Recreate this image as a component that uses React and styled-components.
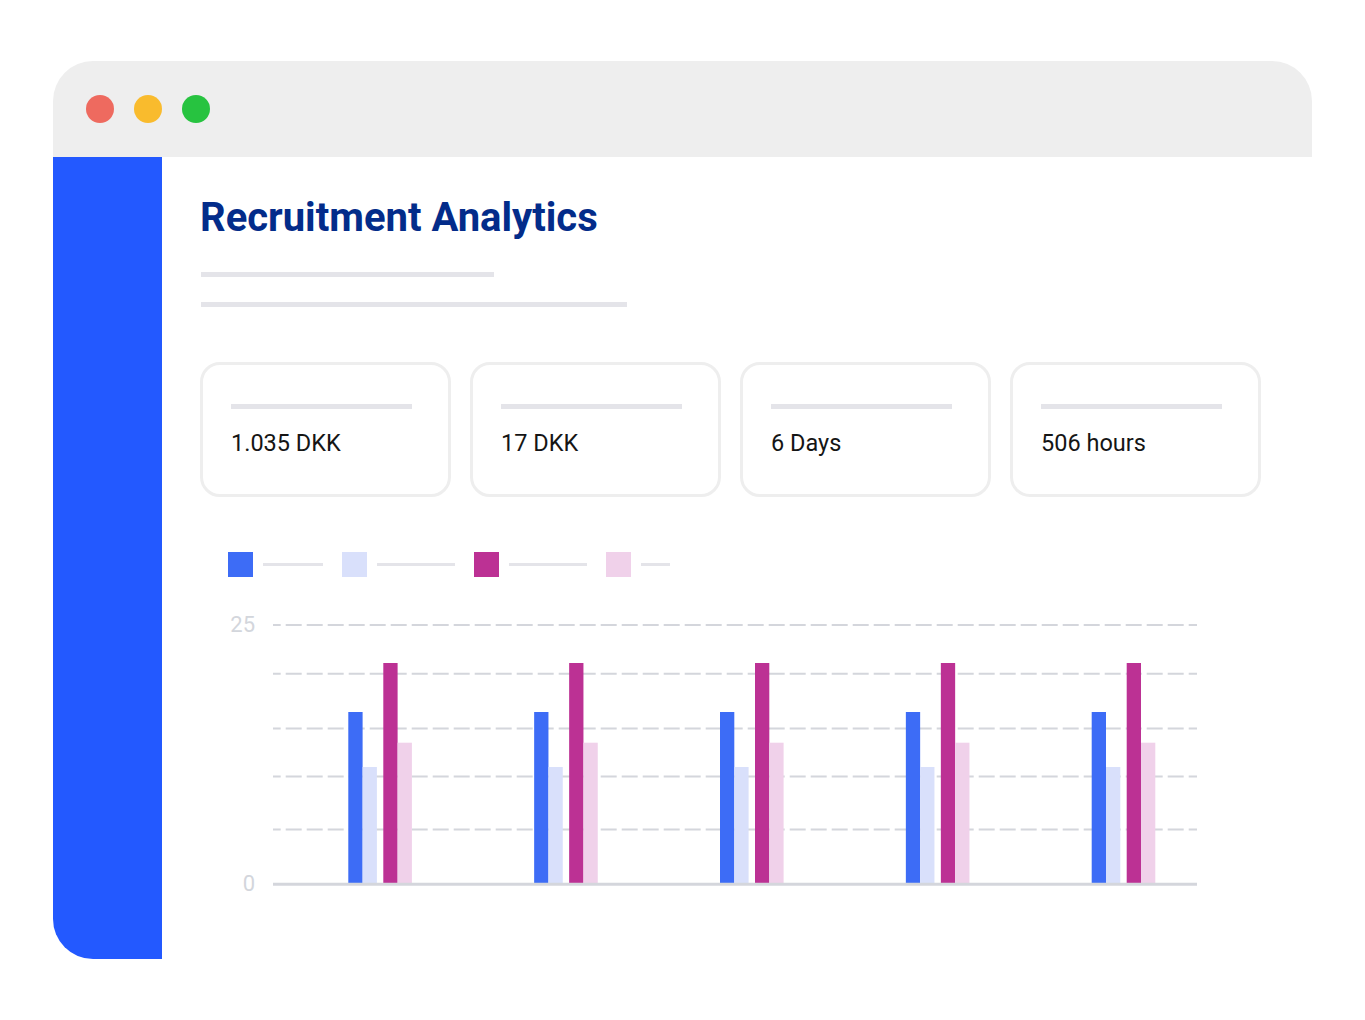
import React from "react";
import styled, { createGlobalStyle } from "styled-components";

const Global = createGlobalStyle`
  html, body { margin: 0; padding: 0; background: #ffffff; }
  body { font-family: Roboto, "Noto Sans", Arial, sans-serif; }
`;

const Page = styled.div`
  padding: 61px 0 61px 53px;
`;

const Window = styled.div`
  width: 1259px;
  height: 898px;
  border-radius: 40px;
  overflow: hidden;
  background: #ffffff;
  display: flex;
  flex-direction: column;
`;

const TitleBar = styled.div`
  height: 96px;
  flex: none;
  background: #eeeeee;
  display: flex;
  align-items: center;
  gap: 20px;
  padding-left: 33px;
`;

const Dot = styled.span`
  width: 28px;
  height: 28px;
  border-radius: 50%;
  background: ${(p) => p.$color};
`;

const Body = styled.div`
  flex: 1;
  display: flex;
`;

const Sidebar = styled.div`
  width: 109px;
  flex: none;
  background: #2359ff;
`;

const Main = styled.div`
  flex: 1;
  padding: 37px 0 0 38px;
  display: flex;
  flex-direction: column;
  align-items: flex-start;
`;

const Title = styled.h1`
  margin: 0;
  font-size: 40px;
  line-height: 48px;
  font-weight: 700;
  color: #032c8a;
`;

const Skeleton = styled.div`
  height: 5px;
  width: ${(p) => p.$w}px;
  margin-top: ${(p) => p.$mt}px;
  margin-left: 1px;
  background: #e4e4e9;
`;

const Cards = styled.div`
  display: flex;
  gap: 19px;
  margin-top: 55px;
`;

const Card = styled.div`
  width: 251px;
  height: 135px;
  box-sizing: border-box;
  border: 3px solid #eeeeee;
  border-radius: 20px;
  padding: 39px 0 0 28px;
`;

const CardBar = styled.div`
  width: 181px;
  height: 5px;
  background: #e4e4e9;
`;

const CardValue = styled.div`
  margin-top: 20px;
  font-size: 23.5px;
  line-height: 28px;
  color: #151515;
`;

const Legend = styled.div`
  display: flex;
  align-items: center;
  margin: 55px 0 0 28px;
  height: 25px;
`;

const LegendItem = styled.div`
  display: flex;
  align-items: center;
  gap: 10px;
  margin-right: 19px;
`;

const Swatch = styled.span`
  width: 25px;
  height: 25px;
  background: ${(p) => p.$color};
`;

const LegendLine = styled.span`
  width: ${(p) => p.$w}px;
  height: 3px;
  background: #e4e4e9;
`;

const Chart = styled.div`
  display: flex;
  align-items: flex-start;
  margin: 37px 0 0 28px;
`;

const YAxis = styled.div`
  width: 45px;
  height: 281px;
  box-sizing: border-box;
  padding-right: 18px;
  display: flex;
  flex-direction: column;
  justify-content: space-between;
  align-items: flex-end;
`;

const YLabel = styled.span`
  font-size: 22px;
  line-height: 22px;
  color: #d3d6dc;
`;

const COLORS = {
  blue: "#3d6cf6",
  lightBlue: "#d9e0fb",
  magenta: "#bc3194",
  pink: "#f0d1ea",
};

const cards = ["1.035 DKK", "17 DKK", "6 Days", "506 hours"];
const legend = [
  { color: COLORS.blue, w: 60 },
  { color: COLORS.lightBlue, w: 78 },
  { color: COLORS.magenta, w: 78 },
  { color: COLORS.pink, w: 29 },
];

const gridYs = [11, 59.7, 114.5, 162.5, 215.5];
const BASE = 270;
const bars = [
  { dx: 0, top: 98, color: COLORS.blue },
  { dx: 14.3, top: 153, color: COLORS.lightBlue },
  { dx: 35, top: 49, color: COLORS.magenta },
  { dx: 49.3, top: 128.7, color: COLORS.pink },
];

function BarChart() {
  return (
    <svg width="924" height="274" viewBox="0 0 924 274">
      {gridYs.map((y) => (
        <line
          key={y}
          x1="0"
          x2="924"
          y1={y}
          y2={y}
          stroke="#d4d6dc"
          strokeWidth="2"
          strokeDasharray="16 5"
          strokeDashoffset="8.3"
        />
      ))}
      {[0, 1, 2, 3, 4].map((g) =>
        bars.map((b, i) => (
          <rect
            key={`${g}-${i}`}
            x={75.3 + g * 185.85 + b.dx}
            y={b.top}
            width="14.3"
            height={BASE - b.top}
            fill={b.color}
          />
        ))
      )}
      <line x1="0" x2="924" y1={BASE + 0.3} y2={BASE + 0.3} stroke="#d4d6dc" strokeWidth="3" />
    </svg>
  );
}

export default function App() {
  return (
    <>
      <Global />
      <Page>
        <Window>
          <TitleBar>
            <Dot $color="#ee6a5f" />
            <Dot $color="#f9bb2d" />
            <Dot $color="#27c340" />
          </TitleBar>
          <Body>
            <Sidebar />
            <Main>
              <Title>Recruitment Analytics</Title>
              <Skeleton $w={293} $mt={30} />
              <Skeleton $w={426} $mt={25} />
              <Cards>
                {cards.map((c) => (
                  <Card key={c}>
                    <CardBar />
                    <CardValue>{c}</CardValue>
                  </Card>
                ))}
              </Cards>
              <Legend>
                {legend.map((l) => (
                  <LegendItem key={l.color}>
                    <Swatch $color={l.color} />
                    <LegendLine $w={l.w} />
                  </LegendItem>
                ))}
              </Legend>
              <Chart>
                <YAxis>
                  <YLabel>25</YLabel>
                  <YLabel>0</YLabel>
                </YAxis>
                <BarChart />
              </Chart>
            </Main>
          </Body>
        </Window>
      </Page>
    </>
  );
}
